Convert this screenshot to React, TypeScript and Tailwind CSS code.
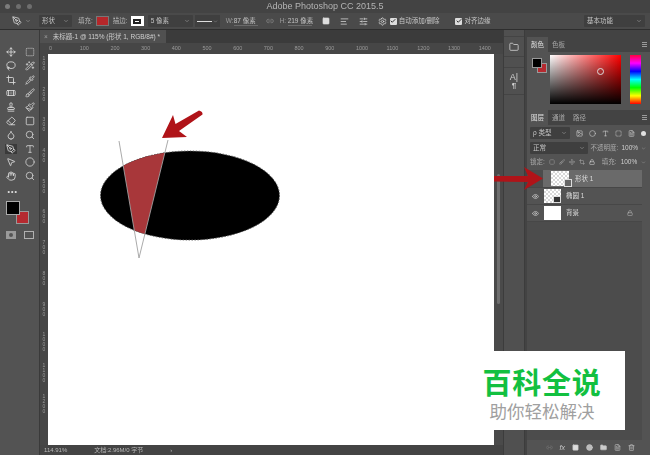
import {
  AlignLeft, Bandage, Brush, ChevronDown, Circle, Crop, Droplet, Eraser, Eye, FileText, Folder, Hand, Image, Link2, Lock, Move,
  MousePointer2, Paintbrush, PenTool, Pipette, Search, Settings, SlidersHorizontal, SquareDashed, Square, Stamp, Trash2, Type, Wand2, Lasso, Check,
} from 'lucide-react';
import type { ReactNode } from 'react';

const font = 'font-["Liberation_Sans","Noto_Sans_CJK_SC",sans-serif]';

const tools = [
  [Move, SquareDashed], [Lasso, Wand2], [Crop, Pipette], [Bandage, Brush], [Stamp, Paintbrush],
  [Eraser, Square], [Droplet, Search], [PenTool, Type], [MousePointer2, Circle], [Hand, Search],
];

const rulerMarks = ['0', '100', '200', '300', '400', '500', '600', '700', '800', '900', '1000', '1100', '1200', '1300', '1400'];
const sideMarks = ['100', '200', '300', '400', '500', '600', '700', '800', '900', '1000', '1100', '1200'];

function Select({ label, width }: { label: ReactNode; width: string }) {
  return (
    <div className={`flex h-[12px] items-center justify-between whitespace-nowrap rounded-[1px] bg-[#3f3f3f] px-[3px] text-[6.5px] text-[#c4c4c4] ${width}`}>
      <span>{label}</span>
      <ChevronDown size={6} className="text-[#a8a8a8]" />
    </div>
  );
}

function Tick({ label }: { label: string }) {
  return (
    <div className="flex items-center gap-[2px] whitespace-nowrap text-[6.5px] text-[#c8c8c8]">
      <span className="flex h-[7px] w-[7px] items-center justify-center rounded-[1px] bg-[#dddddd]">
        <Check size={6} strokeWidth={4} className="text-[#333333]" />
      </span>
      {label}
    </div>
  );
}

function OptionsBar() {
  return (
    <div className="flex h-[17px] items-center whitespace-nowrap border-b border-[#2e2e2e] bg-[#4a4a4a] pl-[12px] pr-[5px]">
      <PenTool size={10} className="text-[#d4d4d4]" />
      <ChevronDown size={6} className="ml-[3px] text-[#a8a8a8]" />
      <div className="ml-[8px]"><Select label="形状" width="w-[33px]" /></div>
      <span className="ml-[6px] text-[6.5px] text-[#b4b4b4]">填充:</span>
      <div className="ml-[3px] h-[10px] w-[13px] border border-[#777777] bg-[#b5272a]" />
      <span className="ml-[4px] text-[6.5px] text-[#b4b4b4]">描边:</span>
      <div className="ml-[3px] flex h-[10px] w-[13px] items-center justify-center bg-white">
        <div className="h-[5px] w-[8px] border-2 border-[#222222]" />
      </div>
      <div className="ml-[4px]"><Select label="5 像素" width="w-[45px]" /></div>
      <div className="ml-[2px] flex h-[12px] w-[25px] items-center gap-[1px] bg-[#3f3f3f] px-[2px]">
        <div className="h-[1px] flex-1 bg-[#dddddd]" />
        <ChevronDown size={5} className="text-[#a8a8a8]" />
      </div>
      <span className="ml-[6px] w-[8px] text-[6.5px] text-[#9c9c9c]">W:</span>
      <span className="w-[24px] border-b border-[#6a6a6a] text-[6.5px] text-[#c4c4c4]">87 像素</span>
      <Link2 size={8} className="ml-[8px] text-[#8c8c8c]" />
      <span className="ml-[6px] w-[8px] text-[6.5px] text-[#9c9c9c]">H:</span>
      <span className="w-[24px] border-b border-[#6a6a6a] text-[6.5px] text-[#c4c4c4]">219 像素</span>
      <Square size={8} fill="#dddddd" className="ml-[10px] text-[#dddddd]" />
      <AlignLeft size={9} className="ml-[10px] text-[#d8d8d8]" />
      <SlidersHorizontal size={9} className="ml-[10px] text-[#d8d8d8]" />
      <Settings size={9} className="ml-[10px] text-[#d8d8d8]" />
      <div className="ml-[3px]"><Tick label="自动添加/删除" /></div>
      <div className="ml-[16px]"><Tick label="对齐边缘" /></div>
      <div className="ml-auto"><Select label="基本功能" width="w-[61px]" /></div>
    </div>
  );
}

function Toolbar() {
  return (
    <div className="flex w-[40px] shrink-0 flex-col items-center border-r border-[#3a3a3a] bg-[#535353] pt-[17px]">
      <div className="flex flex-col gap-[3.8px]">
        {tools.map(([A, B], i) => (
          <div key={i} className="flex w-[32px] justify-between px-[1px]">
            <span className={`flex h-[10px] w-[12px] items-center justify-center ${i === 7 ? 'bg-[#3a3a3a]' : ''}`}>
              <A size={10} className="text-[#dcdcdc]" />
            </span>
            <B size={10} className="text-[#d0d0d0]" />
          </div>
        ))}
      </div>
      <div className="mt-[7px] w-[30px] pl-[3px] text-[7px] font-bold leading-none tracking-[1px] text-[#dddddd]">•••</div>
      <div className="relative mt-[6px] h-[23px] w-[23px] -translate-x-[2px]">
        <div className="absolute bottom-0 right-0 h-[13px] w-[13px] border border-[#999999] bg-[#b52a30]" />
        <div className="absolute left-0 top-0 h-[14px] w-[14px] border border-[#aaaaaa] bg-black" />
      </div>
      <div className="mt-[7px] flex w-[32px] justify-between px-[2px]">
        <div className="flex h-[8px] w-[10px] items-center justify-center bg-[#9a9a9a]">
          <div className="h-[4px] w-[4px] rounded-full bg-[#555555]" />
        </div>
        <div className="h-[8px] w-[10px] border border-[#b0b0b0]" />
      </div>
    </div>
  );
}

function Drawing() {
  return (
    <svg className="block h-[391px] w-[446px]" viewBox="48 54 446 391">
      <defs>
        <clipPath id="wedge">
          <polygon points="119,141 139,258 168,140" />
        </clipPath>
      </defs>
      <ellipse cx="190" cy="195.5" rx="89.5" ry="44.5" fill="#000000" stroke="#555555" strokeWidth="1" strokeDasharray="1.5 1.5" />
      <ellipse cx="190" cy="195.5" rx="89.5" ry="44.5" fill="#a8373a" clipPath="url(#wedge)" />
      <polyline points="119,141 139,258 168,140" fill="none" stroke="#a0a0a0" strokeWidth="0.9" />
    </svg>
  );
}

function DocArea() {
  return (
    <div className="flex min-w-0 flex-1 flex-col bg-[#4b4b4b]">
      <div className="flex h-[13px] shrink-0 bg-[#3b3b3b]">
        <div className="flex w-[126px] items-center gap-[5px] whitespace-nowrap bg-[#505050] pl-[4px] text-[6.5px] text-[#cfcfcf]">
          <span className="text-[#a0a0a0]">×</span>
          未标题-1 @ 115% (形状 1, RGB/8#) *
        </div>
      </div>
      <div className="flex h-[11px] shrink-0 items-center overflow-hidden bg-[#464646] pl-[9px] text-[5.5px] text-[#9a9a9a]">
        {rulerMarks.map(m => (
          <span key={m} className="w-[30.7px] shrink-0">{m}</span>
        ))}
      </div>
      <div className="flex flex-1">
        <div className="flex w-[8px] flex-col overflow-hidden bg-[#464646] pt-[2px] text-[5px] text-[#9a9a9a]">
          {sideMarks.map(m => (
            <div key={m} className="flex h-[30.7px] shrink-0 flex-col items-center">
              {m.split('').map((d, i) => (
                <span key={i} className="leading-[5px]">{d}</span>
              ))}
            </div>
          ))}
        </div>
        <div className="h-[391px] w-[446px] bg-white">
          <Drawing />
        </div>
        <div className="flex w-[9px] justify-center bg-[#4a4a4a] py-[120px]">
          <div className="h-[130px] w-[3px] rounded-full bg-[#6e6e6e]" />
        </div>
      </div>
      <div className="flex h-[10px] shrink-0 items-center gap-[27px] whitespace-nowrap bg-[#444444] pl-[4px] text-[6px] text-[#b8b8b8]">
        <span>114.91%</span>
        <span>文档:2.96M/0 字节</span>
        <span>›</span>
      </div>
    </div>
  );
}

function Dock() {
  return (
    <div className="flex w-[22px] shrink-0 flex-col items-center border-x border-[#3c3c3c] bg-[#505050] pt-[6px] text-[#cfcfcf]">
      <div className="flex h-[21px] w-full items-center justify-center border-y border-[#444444]">
        <Folder size={10} />
      </div>
      <div className="mt-[10px] flex h-[28px] w-full flex-col items-center justify-center border-y border-[#444444]">
        <span className="text-[9px] leading-none">A|</span>
        <span className="text-[8px] font-bold leading-none">¶</span>
      </div>
    </div>
  );
}

function PanelTabs({ tabs }: { tabs: string[] }) {
  return (
    <div className="flex h-[15px] shrink-0 items-end justify-between bg-[#434343] pr-[3px]">
      <div className="flex h-full">
        {tabs.map((t, i) => (
          <span key={t} className={`flex h-full w-[21px] items-center justify-center text-[6.5px] ${i === 0 ? 'bg-[#535353] text-[#e2e2e2]' : 'text-[#a8a8a8]'}`}>{t}</span>
        ))}
      </div>
      <div className="mb-[5px] flex h-[5px] w-[5px] flex-col justify-between">
        <div className="h-px bg-[#9a9a9a]" /><div className="h-px bg-[#9a9a9a]" /><div className="h-px bg-[#9a9a9a]" />
      </div>
    </div>
  );
}

function ColorPanel() {
  return (
    <div className="h-[73px] shrink-0 bg-[#535353]">
      <PanelTabs tabs={['颜色', '色板']} />
      <div className="flex pl-[5px] pt-[3px]">
        <div className="relative mt-[3px] h-[15px] w-[15px]">
          <div className="absolute bottom-0 right-0 h-[10px] w-[10px] border border-[#999999] bg-[#b52a30]" />
          <div className="absolute left-0 top-0 h-[10px] w-[10px] border border-[#999999] bg-black" />
        </div>
        <div className="relative ml-[3px] h-[49px] w-[71px] bg-[linear-gradient(to_top,#000000,transparent),linear-gradient(to_right,#ffffff,#ff0000)]">
          <div className="absolute left-[47px] top-[13px] h-[7px] w-[7px] rounded-full border border-[#dddddd]" />
        </div>
        <div className="ml-[9px] h-[49px] w-[11px] bg-[linear-gradient(to_bottom,#ff0040,#ff00ff,#0000ff,#00ffff,#00ff00,#ffff00,#ff0000)]" />
      </div>
    </div>
  );
}

const checker = 'bg-[repeating-conic-gradient(#d8d8d8_0_25%,#ffffff_0_50%)] bg-[length:4px_4px]';

function LayersPanel() {
  return (
    <div className="flex min-h-0 flex-1 flex-col bg-[#535353]">
      <PanelTabs tabs={['图层', '通道', '路径']} />
      <div className="flex h-[16px] shrink-0 items-center gap-[6px] pl-[3px] text-[#cfcfcf]">
        <Select label="ρ 类型" width="w-[40px]" />
        <Image size={7} />
        <Circle size={7} />
        <Type size={7} />
        <SquareDashed size={7} />
        <FileText size={7} />
        <div className="h-[5px] w-[5px] rounded-full bg-[#e0e0e0]" />
      </div>
      <div className="flex h-[14px] shrink-0 items-center gap-[3px] whitespace-nowrap pl-[3px] pr-[4px] text-[6.5px] text-[#a8a8a8]">
        <Select label="正常" width="w-[58px]" />
        <span>不透明度:</span>
        <span className="text-[#cfcfcf]">100%</span>
        <ChevronDown size={5} />
      </div>
      <div className="flex h-[14px] shrink-0 items-center gap-[4px] whitespace-nowrap pl-[3px] text-[6.5px] text-[#a8a8a8]">
        <span>锁定:</span>
        <SquareDashed size={6} />
        <Brush size={6} />
        <Move size={6} />
        <Crop size={6} />
        <Lock size={6} className="text-[#dddddd]" />
        <span className="ml-[3px]">填充:</span>
        <span className="text-[#cfcfcf]">100%</span>
        <ChevronDown size={5} />
      </div>
      <div className="mr-[8px] mt-[1px] min-h-0 flex-1 bg-[#4c4c4c] text-[6.5px] text-[#dcdcdc]">
        <div className="flex h-[18px] items-center border-b border-[#474747]">
          <div className="w-[16px] shrink-0" />
          <div className="flex h-full flex-1 items-center bg-[#6a6a6a] pl-[8px]">
            <div className={`relative h-[15px] w-[18px] ${checker}`}>
              <div className="absolute -bottom-[1px] -right-[3px] h-[8px] w-[8px] border border-[#dddddd] bg-[#666666]" />
            </div>
            <span className="ml-[6px]">形状 1</span>
          </div>
        </div>
        <div className="flex h-[17px] items-center border-b border-[#474747] bg-[#535353]">
          <span className="flex w-[17px] justify-center"><Eye size={7} className="text-[#dddddd]" /></span>
          <div className={`relative h-[14px] w-[17px] ${checker}`}>
            <div className="absolute bottom-0 right-0 h-[7px] w-[8px] border border-[#dddddd] bg-[#333333]" />
          </div>
          <span className="ml-[5px]">椭圆 1</span>
        </div>
        <div className="flex h-[17px] items-center border-b border-[#474747] bg-[#535353]">
          <span className="flex w-[17px] justify-center"><Eye size={7} className="text-[#dddddd]" /></span>
          <div className="h-[14px] w-[17px] bg-white" />
          <span className="ml-[5px]">背景</span>
          <Lock size={6} className="ml-auto mr-[9px] text-[#bcbcbc]" />
        </div>
      </div>
      <div className="flex h-[15px] shrink-0 items-center justify-end gap-[7px] pr-[15px] text-[#c8c8c8]">
        <Link2 size={7} className="text-[#777777]" />
        <span className="text-[7px] italic leading-none">fx</span>
        <Square size={7} fill="#dddddd" />
        <Circle size={7} fill="#bbbbbb" />
        <Folder size={7} fill="#cccccc" />
        <FileText size={7} />
        <Trash2 size={7} />
      </div>
    </div>
  );
}

export default function App() {
  return (
    <div className={`relative h-[455px] w-[650px] overflow-hidden bg-[#535353] ${font}`}>
      <div className="flex h-full flex-col blur-[0.35px]">
        <div className="relative flex h-[13px] shrink-0 items-center justify-center bg-[#434343] text-[9px] text-[#b4b4b4]">
          <div className="absolute left-[5px] flex gap-[6px]">
            <div className="h-[5px] w-[5px] rounded-full bg-[#7c7c7c]" />
            <div className="h-[5px] w-[5px] rounded-full bg-[#6e6e6e]" />
            <div className="h-[5px] w-[5px] rounded-full bg-[#6e6e6e]" />
          </div>
          Adobe Photoshop CC 2015.5
        </div>
        <OptionsBar />
        <div className="flex min-h-0 flex-1">
          <Toolbar />
          <DocArea />
          <Dock />
          <div className="flex w-[125px] shrink-0 flex-col bg-[#434343] pl-[2px]">
            <div className="h-[7px] shrink-0" />
            <ColorPanel />
            <LayersPanel />
          </div>
        </div>
      </div>

      {/* 标注箭头 */}
      <svg className="pointer-events-none absolute inset-0 h-[455px] w-[650px]" viewBox="0 0 650 455">
        <path d="M162 138 L173 115 L175.5 124 L199 110.5 Q203 111.5 202.5 114.5 L179 131 L187 137 Z" fill="#b01318" />
        <path d="M494 176 L528 176 L524 167 L543 178.5 L524 190 L528 182 L494 181.5 Z" fill="#b01318" />
      </svg>

      {/* 水印 */}
      <div className="absolute left-[451px] top-[351px] flex h-[79px] w-[174px] flex-col items-center bg-white pl-[8px] pt-[17px]">
        <span className="text-[29px] font-bold leading-[32px] tracking-[0.7px] text-[#12c040]">百科全说</span>
        <span className="mt-[2px] text-[17.5px] leading-[20px] text-[#a0a0a0]">助你轻松解决</span>
      </div>
    </div>
  );
}
